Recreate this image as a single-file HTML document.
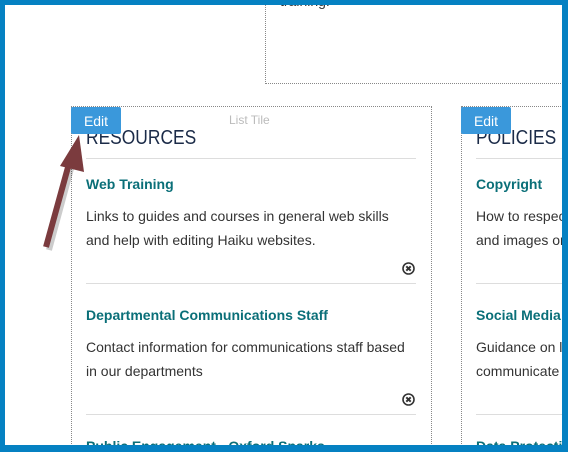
<!DOCTYPE html><html><head><style>
html,body{margin:0;width:568px;height:452px;overflow:hidden}
body{background:#fff;font-family:"Liberation Sans",sans-serif;position:relative}
.frame{position:absolute;left:0;top:0;width:568px;height:452px;box-sizing:border-box;border-style:solid;border-color:#0581c2;border-width:5px 6px 7px 5px;z-index:10;pointer-events:none}
.box{position:absolute;border:1px dotted #888}
.edit{position:absolute;width:50px;height:27px;background:#3a98db;color:#fff;font-size:14px;line-height:28px;text-align:center;border-radius:2px}
.h{position:absolute;font-size:20px;color:#1b2b48;transform:scaleX(0.87);transform-origin:left top;white-space:nowrap}
.hr{position:absolute;height:1px;background:#ddd}
.t{position:absolute;font-size:14px;font-weight:bold;color:#0a6f78;white-space:nowrap}
.d{position:absolute;font-size:14px;color:#333;line-height:24px;white-space:nowrap}
.x{position:absolute;width:13px;height:13px}
</style></head><body>
<div style="position:absolute;left:0;top:0;width:568px;height:452px;overflow:hidden">
<div class="box" style="left:265px;top:-10px;width:320px;height:92px"></div>
<div class="d" style="left:280px;top:-11px">training.</div>
<div class="box" style="left:71px;top:106px;width:359px;height:360px"></div>
<div class="box" style="left:461px;top:106px;width:200px;height:360px"></div>
<div style="position:absolute;left:229px;top:113px;font-size:12px;color:#bbb">List Tile</div>
<div class="h" style="left:86px;top:127px">RESOURCES</div>
<div class="h" style="left:476px;top:127px">POLICIES</div>
<div class="edit" style="left:71px;top:107px">Edit</div>
<div class="edit" style="left:461px;top:107px">Edit</div>
<div class="hr" style="left:86px;top:158px;width:330px"></div>
<div class="hr" style="left:476px;top:158px;width:100px"></div>
<div class="t" style="left:86px;top:176px">Web Training</div>
<div class="t" style="left:476px;top:176px">Copyright</div>
<div class="d" style="left:86px;top:204px">Links to guides and courses in general web skills<br>and help with editing Haiku websites.</div>
<div class="d" style="left:476px;top:204px">How to respect<br>and images or</div>
<svg class="x" style="left:402px;top:262px" viewBox="0 0 13 13"><circle cx="6.5" cy="6.5" r="5.5" fill="#fff" stroke="#333" stroke-width="1.6"/><path d="M4.3 4.3L8.7 8.7M8.7 4.3L4.3 8.7" stroke="#333" stroke-width="2"/></svg>
<div class="hr" style="left:86px;top:283px;width:330px"></div>
<div class="hr" style="left:476px;top:283px;width:100px"></div>
<div class="t" style="left:86px;top:307px">Departmental Communications Staff</div>
<div class="t" style="left:476px;top:307px">Social Media</div>
<div class="d" style="left:86px;top:335px">Contact information for communications staff based<br>in our departments</div>
<div class="d" style="left:476px;top:335px">Guidance on l<br>communicate</div>
<svg class="x" style="left:402px;top:393px" viewBox="0 0 13 13"><circle cx="6.5" cy="6.5" r="5.5" fill="#fff" stroke="#333" stroke-width="1.6"/><path d="M4.3 4.3L8.7 8.7M8.7 4.3L4.3 8.7" stroke="#333" stroke-width="2"/></svg>
<div class="hr" style="left:86px;top:414px;width:330px"></div>
<div class="hr" style="left:476px;top:414px;width:100px"></div>
<div class="t" style="left:86px;top:438px">Public Engagement - Oxford Sparks</div>
<div class="t" style="left:476px;top:438px">Data Protection</div>
<svg style="position:absolute;left:0;top:0" width="568" height="452">
<line x1="49" y1="250" x2="72" y2="165" stroke="#00000033" stroke-width="6"/>
<line x1="46" y1="247" x2="70" y2="160" stroke="#7b3b3e" stroke-width="6"/>
<polygon points="79,135 60,166 84,172" fill="#7b3b3e"/>
</svg>
<div class="frame"></div>
</div>
</body></html>
